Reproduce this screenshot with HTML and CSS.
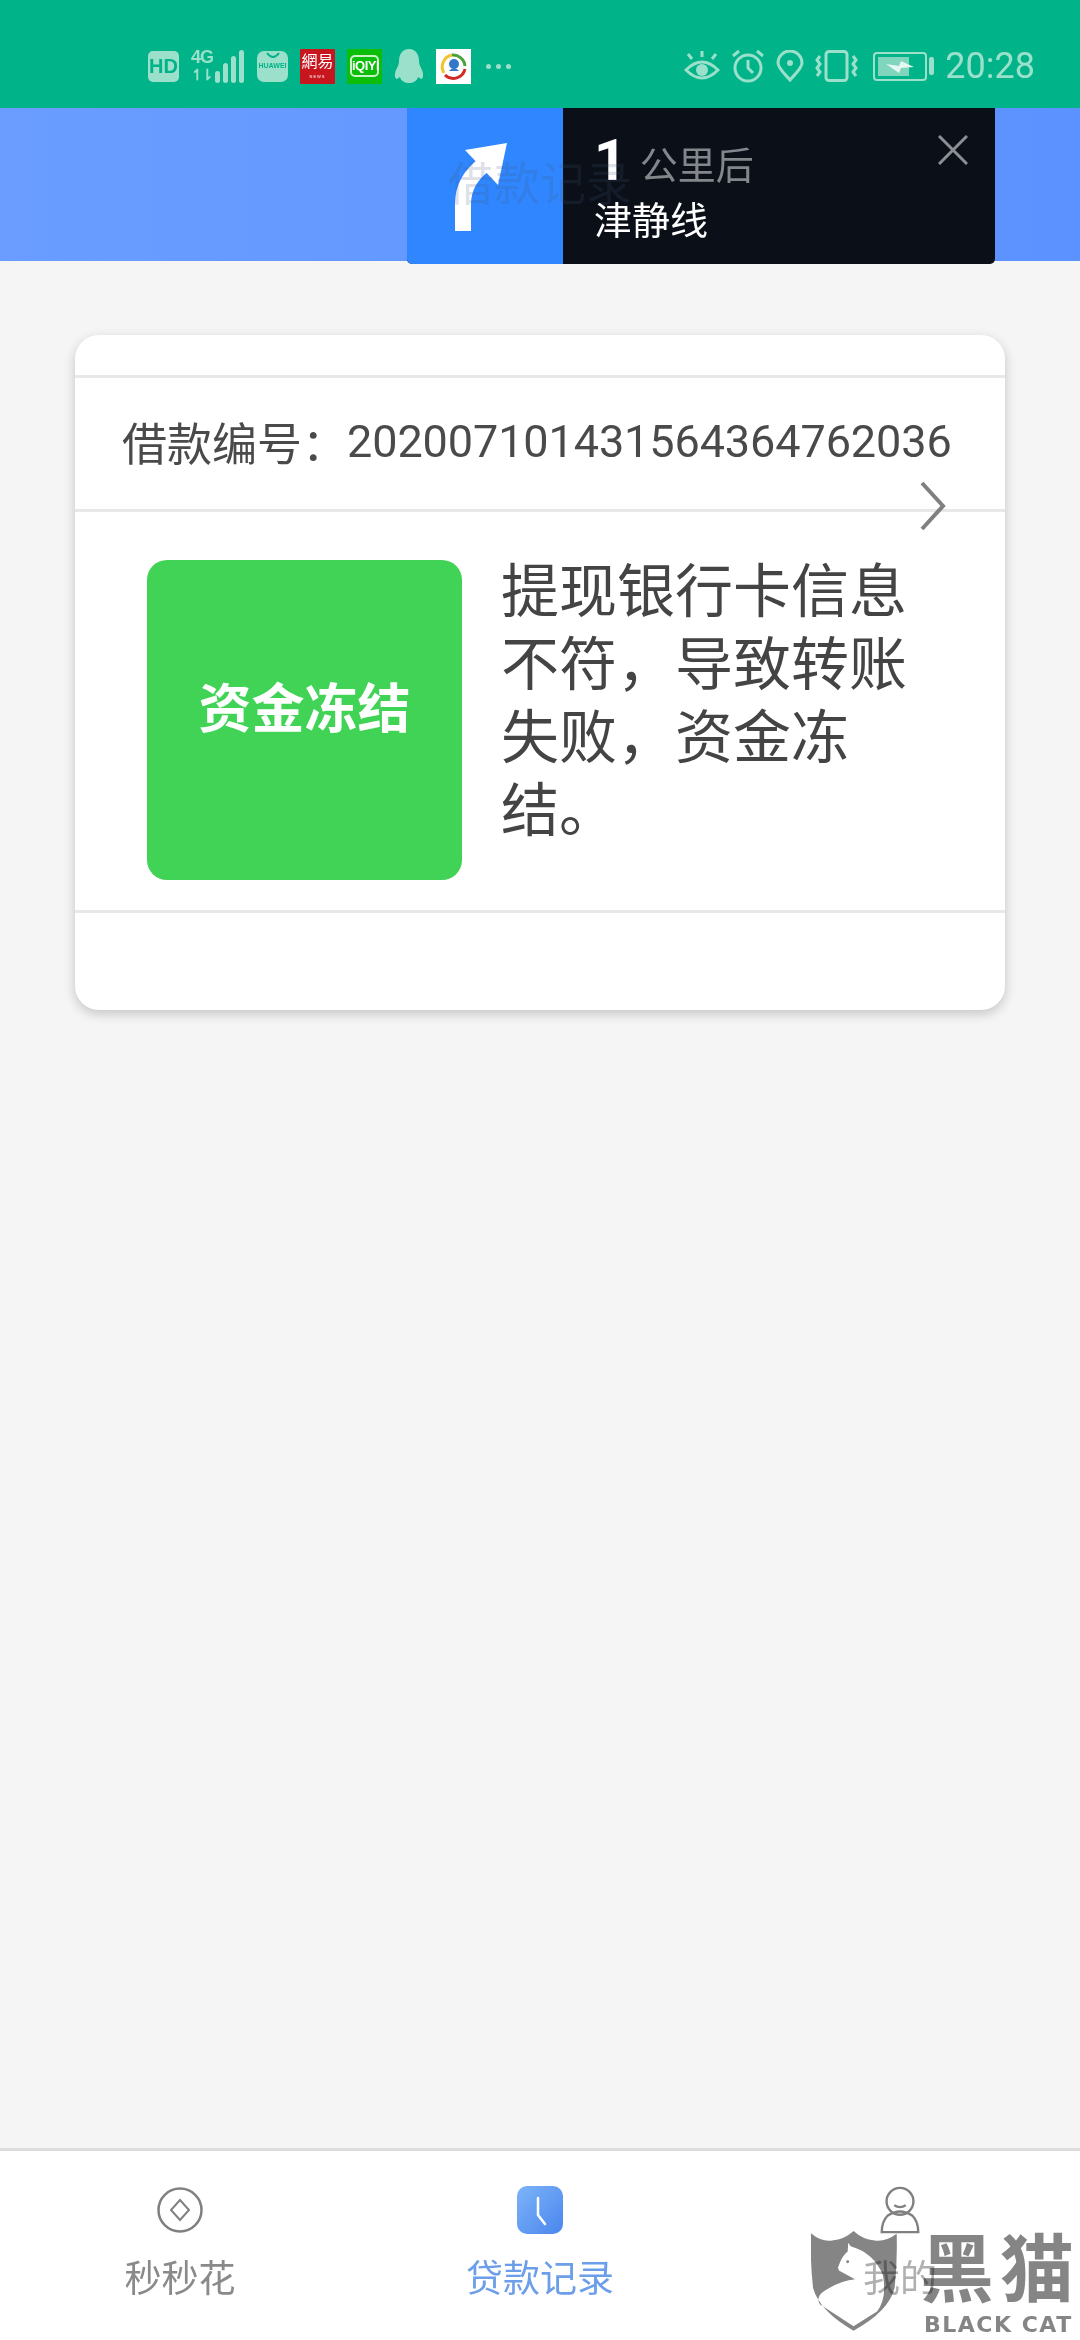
FILE: index.html
```html
<!DOCTYPE html>
<html lang="zh-CN">
<head>
    <meta charset="UTF-8">
    <meta name="viewport" content="width=device-width, initial-scale=1.0">
    <title>借款记录</title>
    <link rel="stylesheet" href="styles.css">
</head>
<body>
    <div class="status-bar">
        <div class="status-left">
            <div class="ic-hd">HD</div>
            <div class="ic-signal">
                <div class="net-label"><span>4G</span><span class="net-arrows">↿⇂</span></div>
                <svg width="30" height="34" viewBox="0 0 30 34"><g fill="#9be0cb"><rect x="0" y="22" width="5" height="12" rx="2.5"/><rect x="8" y="14" width="5" height="20" rx="2.5"/><rect x="16" y="7" width="5" height="27" rx="2.5"/><rect x="24" y="1" width="5" height="33" rx="2.5"/></g></svg>
            </div>
            <div class="ic-huawei">
                <svg width="16" height="10" viewBox="0 0 16 10"><path d="M2 2q6 8 12 0" fill="none" stroke="#00b388" stroke-width="2"/></svg>
                <span>HUAWEI</span>
            </div>
            <div class="ic-netease"><span class="ne-title">網易</span><span class="ne-sub">NEWS</span></div>
            <div class="ic-iqiyi"><span>iQIYI</span></div>
            <svg class="ic-qq" width="30" height="35" viewBox="0 0 30 35"><path d="M15 0c7 0 10 6 10 12 0 3 1 5 3 9 2 5 1 9-1 9l-3-2c-1 4-5 6-9 6s-8-2-9-6l-3 2c-2 0-3-4-1-9 2-4 3-6 3-9C5 6 8 0 15 0z" fill="#9be0cb"/></svg>
            <div class="ic-news">
                <svg width="29" height="29" viewBox="0 0 29 29">
                    <path d="M5 21A12 12 0 0 1 13 3" fill="none" stroke="#f2c230" stroke-width="3"/>
                    <path d="M13 3A12 12 0 0 1 26 14" fill="none" stroke="#4aa23c" stroke-width="3"/>
                    <path d="M26 17A12 12 0 0 1 6 23" fill="none" stroke="#cf2a25" stroke-width="3"/>
                    <circle cx="15" cy="12" r="5" fill="#3277c8"/><path d="M10 19q5-6 10 0z" fill="#3277c8"/>
                </svg>
            </div>
            <div class="ic-dots"><i></i><i></i><i></i></div>
        </div>
        <div class="status-right">
            <svg width="36" height="32" viewBox="0 0 36 32" fill="none" stroke="#9be0cb" stroke-width="3"><path d="M2 20q16-16 32 0q-16 16-32 0z"/><circle cx="18" cy="20" r="6" fill="#9be0cb" stroke="none"/><path d="M18 1v6M4 4l4 5M32 4l-4 5"/></svg>
            <svg width="34" height="34" viewBox="0 0 34 34" fill="none" stroke="#9be0cb" stroke-width="3"><circle cx="17" cy="19" r="13"/><path d="M17 11v8l5 5M2 7l6-5M32 7l-6-5"/></svg>
            <svg width="28" height="32" viewBox="0 0 28 32" fill="none" stroke="#9be0cb" stroke-width="3"><path d="M14 30C8 23 2 18 2 13a12 12 0 0 1 24 0c0 5-6 10-12 17z"/><circle cx="14" cy="13" r="3" fill="#9be0cb" stroke="none"/></svg>
            <svg width="43" height="32" viewBox="0 0 43 32" fill="none" stroke="#9be0cb" stroke-width="3"><rect x="11" y="1.5" width="21" height="29" rx="3"/><path d="M5 6l-3 4 3 4-3 4 3 4-3 4M38 6l3 4-3 4 3 4-3 4 3 4"/></svg>
            <div class="battery">
                <div class="battery-body">
                    <div class="battery-fill"></div>
                    <svg class="battery-bolt" width="28" height="14" viewBox="0 0 28 14"><path d="M0 4l13 2 2-5 13 6-13 1-2 5z" fill="#e4f7f0"/></svg>
                </div>
                <div class="battery-nub"></div>
            </div>
            <div class="clock">20:28</div>
        </div>
    </div>

    <div class="header">
        <div class="header-title">借款记录</div>
    </div>

    <div class="nav-popup">
        <div class="nav-turn">
            <svg width="156" height="156" viewBox="0 0 156 156"><path d="M56 123V96Q56 72 78 56" fill="none" stroke="#fff" stroke-width="16"/><path d="M100 35L58 42L91 77z" fill="#fff"/></svg>
        </div>
        <div class="nav-info">
            <div class="nav-distance"><b>1</b><span>公里后</span></div>
            <div class="nav-road">津静线</div>
        </div>
        <svg class="nav-close" width="30" height="30" viewBox="0 0 30 30"><path d="M1 1l28 28M29 1L1 29" stroke="#8c8f93" stroke-width="3"/></svg>
    </div>

    <div class="content">
        <div class="card">
            <div class="card-top"></div>
            <div class="loan-no">
                <span class="loan-label">借款编号：</span><span class="loan-digits">202007101431564364762036</span>
            </div>
            <div class="loan-status">
                <div class="status-box">资金冻结</div>
                <div class="status-text">提现银行卡信息不符，导致转账失败，资金冻结。</div>
            </div>
            <div class="card-bottom"></div>
            <svg class="chevron" width="26" height="50" viewBox="0 0 26 50"><path d="M2 2l21 23L2 48" fill="none" stroke="#808080" stroke-width="4"/></svg>
        </div>
    </div>

    <div class="tabbar">
        <div class="tab">
            <svg width="46" height="48" viewBox="0 0 46 48" fill="none" stroke="#808080"><circle cx="23" cy="24" r="21.5" stroke-width="2.5"/><path d="M23 14l9 10-9 10-9-10z" stroke-width="2"/></svg>
            <span>秒秒花</span>
        </div>
        <div class="tab tab-active">
            <svg width="46" height="48" viewBox="0 0 46 48"><defs><linearGradient id="clockBg" x1="0" y1="0" x2="1" y2="1"><stop offset="0" stop-color="#7db4f8"/><stop offset="1" stop-color="#4a86ee"/></linearGradient></defs><rect width="46" height="48" rx="10" fill="url(#clockBg)"/><path d="M21 12v17l7 9" fill="none" stroke="#fff" stroke-width="2.5" stroke-linecap="round"/></svg>
            <span>贷款记录</span>
        </div>
        <div class="tab">
            <svg width="42" height="50" viewBox="0 0 42 50" fill="none" stroke="#808080" stroke-width="2.5"><circle cx="21" cy="16" r="14"/><path d="M15 20q6 4 12 0"/><path d="M8 31q13-9 26 0q6 6 6 17H2q0-11 6-17z"/></svg>
            <span class="tab-light">我的</span>
        </div>
    </div>

    <div class="watermark">
        <svg class="wm-shield" width="97" height="115" viewBox="0 0 300 345"><path fill-rule="evenodd" fill="#858585" d="M0 8Q35 38 72 33Q115 28 145 0Q175 28 217 33Q255 38 292 10Q295 110 285 195Q265 275 145 340Q30 275 7 195Q-3 110 0 8zM127 40L135 52Q215 75 245 150Q260 230 225 275L145 325L30 250Q15 225 45 205Q100 170 150 165L95 135L92 125Q105 85 125 70z"/><circle cx="125" cy="105" r="5" fill="#858585"/></svg>
        <div class="wm-text">
            <div class="wm-cn">黑猫</div>
            <div class="wm-en">BLACK CAT</div>
        </div>
    </div>
</body>
</html>
```

FILE: styles.css
```css
* {
    box-sizing: border-box;
}
html, body {
    margin: 0;
    padding: 0;
}
body {
    position: relative;
    width: 1080px;
    height: 2340px;
    overflow: hidden;
    display: flex;
    flex-direction: column;
    background: #f5f5f5;
    font-family: "Liberation Sans", "Noto Sans CJK SC", sans-serif;
}

/* status bar */
.status-bar {
    height: 108px;
    flex: none;
    display: flex;
    align-items: center;
    justify-content: space-between;
    padding: 24px 45px 0 148px;
    background: #00b388;
    color: #9be0cb;
}
.status-left, .status-right {
    display: flex;
    align-items: center;
}
.status-left {
    gap: 12px;
}
.status-right {
    gap: 11px;
}
.ic-hd {
    width: 31px;
    height: 31px;
    border-radius: 5px;
    background: #9be0cb;
    color: #00b388;
    font: bold 20px/31px "Liberation Sans", sans-serif;
    text-align: center;
}
.ic-signal {
    display: flex;
    align-items: flex-end;
    gap: 3px;
}
.net-label {
    display: flex;
    flex-direction: column;
    font: bold 18px/17px "Liberation Sans", sans-serif;
    width: 21px;
    letter-spacing: -1px;
}
.net-arrows {
    font-size: 15px;
    letter-spacing: -3px;
}
.ic-huawei {
    width: 31px;
    height: 31px;
    border-radius: 7px;
    background: #9be0cb;
    color: #00b388;
    display: flex;
    flex-direction: column;
    align-items: center;
    font: bold 7px/10px "Liberation Sans", sans-serif;
}
.ic-netease {
    width: 35px;
    height: 35px;
    background: #c8161e;
    color: #fff;
    display: flex;
    flex-direction: column;
    align-items: center;
    border-radius: 1px;
}
.ne-title {
    font-size: 16px;
    line-height: 25px;
}
.ne-sub {
    font-size: 4px;
    line-height: 6px;
    letter-spacing: 1px;
}
.ic-iqiyi {
    width: 35px;
    height: 35px;
    background: #0cbd0a;
    display: flex;
    align-items: center;
    justify-content: center;
    border-radius: 1px;
}
.ic-iqiyi span {
    width: 29px;
    border: 2px solid #c9f2c8;
    border-radius: 5px;
    color: #fff;
    font: bold 13px/18px "Liberation Sans", sans-serif;
    text-align: center;
    letter-spacing: -0.5px;
}
.ic-news {
    width: 35px;
    height: 35px;
    background: #fff;
    display: flex;
    align-items: center;
    justify-content: center;
}
.ic-dots {
    display: flex;
    gap: 5px;
    margin-left: 3px;
}
.ic-dots i {
    width: 5px;
    height: 5px;
    border-radius: 50%;
    background: #9be0cb;
}
.battery {
    display: flex;
    align-items: center;
    gap: 2px;
    margin-left: 4px;
}
.battery-body {
    position: relative;
    width: 54px;
    height: 29px;
    padding: 3px;
    border: 2px solid #9be0cb;
    border-radius: 4px;
}
.battery-fill {
    width: 31px;
    height: 100%;
    background: #7fd6bc;
}
.battery-bolt {
    position: absolute;
    left: 11px;
    top: 6px;
}
.battery-nub {
    width: 5px;
    height: 18px;
    border-radius: 2px;
    background: #9be0cb;
}
.clock {
    font: 36px/1 Roboto, "Liberation Sans", sans-serif;
}

/* header */
.header {
    height: 153px;
    flex: none;
    display: flex;
    align-items: center;
    justify-content: center;
    padding-bottom: 10px;
    background: linear-gradient(90deg, #6a9dff, #5b92ff);
}
.header-title {
    position: relative;
    z-index: 2;
    font-size: 46px;
    color: rgba(70, 90, 120, 0.18);
}

/* navigation popup lying over the header */
.nav-popup {
    position: absolute;
    left: 407px;
    top: 108px;
    width: 588px;
    height: 156px;
    display: flex;
    border-radius: 0 0 5px 5px;
    overflow: hidden;
    background: #0a0f18;
}
.nav-turn {
    width: 156px;
    background: #2f86ff;
}
.nav-info {
    padding: 21px 0 0 31px;
    color: #fff;
}
.nav-distance {
    display: flex;
    align-items: flex-start;
    gap: 13px;
    height: 64px;
}
.nav-distance b {
    font: bold 57px/64px Roboto, "Liberation Sans", sans-serif;
}
.nav-distance span {
    margin-top: 5px;
    font-size: 38px;
    line-height: 64px;
    color: #83868a;
}
.nav-road {
    font-size: 38px;
    line-height: 56px;
}
.nav-close {
    position: absolute;
    left: 531px;
    top: 27px;
}

/* card */
.content {
    flex: 1;
    padding: 74px 75px 0;
}
.card {
    position: relative;
    height: 675px;
    border-radius: 24px;
    background: #fff;
    box-shadow: 0 4px 12px rgba(0, 0, 0, 0.2);
}
.card-top {
    height: 40px;
}
.loan-no {
    height: 137px;
    padding: 0 0 4px 47px;
    display: flex;
    align-items: center;
    border-top: 3px solid #e8e8e8;
    border-bottom: 3px solid #e8e8e8;
    color: #4a4a4a;
    font-size: 45px;
    white-space: nowrap;
}
.loan-digits {
    font-family: Roboto, "Liberation Sans", sans-serif;
    letter-spacing: -0.1px;
}
.loan-status {
    display: flex;
    gap: 39px;
    height: 401px;
    padding: 48px 0 0 72px;
    border-bottom: 3px solid #e8e8e8;
}
.status-box {
    flex: none;
    width: 315px;
    height: 320px;
    padding-bottom: 30px;
    border-radius: 20px;
    background: #40d356;
    color: #fff;
    font-size: 53px;
    font-weight: bold;
    display: flex;
    align-items: center;
    justify-content: center;
}
.status-text {
    width: 420px;
    margin-top: -5px;
    font-size: 58px;
    line-height: 73px;
    color: #444;
}
.chevron {
    position: absolute;
    left: 845px;
    top: 146px;
}

/* bottom tabs */
.tabbar {
    height: 192px;
    flex: none;
    display: grid;
    grid-template-columns: repeat(3, 360px);
    padding-top: 35px;
    border-top: 3px solid #ddd;
    background: #fff;
}
.tab {
    display: flex;
    flex-direction: column;
    align-items: center;
    gap: 24px;
    font-size: 37px;
    line-height: 44px;
    color: #8a8a8a;
}
.tab svg {
    display: block;
    height: 48px;
}
.tab-active {
    color: #6d9eea;
}
.tab-light {
    color: #b0b0b0;
}

/* watermark */
.watermark {
    position: absolute;
    left: 811px;
    top: 2224px;
    width: 269px;
    height: 116px;
    display: flex;
    gap: 17px;
    color: #858585;
    mix-blend-mode: multiply;
}
.wm-text {
    padding: 7px 0 0 4px;
}
.wm-cn {
    font-size: 74px;
    line-height: 80px;
    font-weight: bold;
    letter-spacing: 6px;
    white-space: nowrap;
}
.wm-en {
    margin-left: 4px;
    font: bold 22px/28px "DejaVu Sans", sans-serif;
    letter-spacing: 1.5px;
    white-space: nowrap;
}
```
